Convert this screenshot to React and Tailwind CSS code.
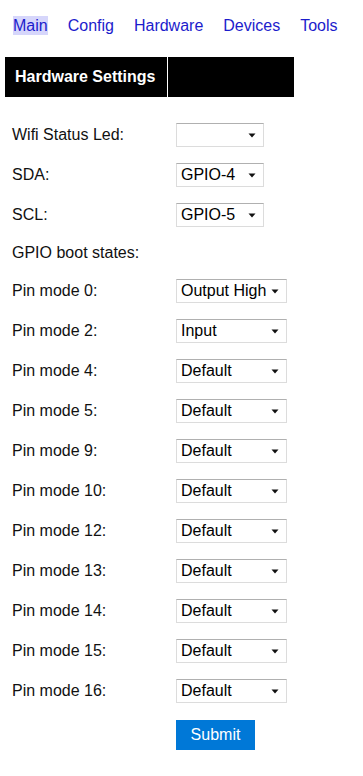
const navLinks = ['Main', 'Config', 'Hardware', 'Devices', 'Tools'];

const pinModes = [
    { pin: 0, value: 'Output High' },
    { pin: 2, value: 'Input' },
    { pin: 4, value: 'Default' },
    { pin: 5, value: 'Default' },
    { pin: 9, value: 'Default' },
    { pin: 10, value: 'Default' },
    { pin: 12, value: 'Default' },
    { pin: 13, value: 'Default' },
    { pin: 14, value: 'Default' },
    { pin: 15, value: 'Default' },
    { pin: 16, value: 'Default' }
];

// Fake native select: light border, darker top edge, tiny triangle on the right
const Select = ({ value, wide }) => (
    <div
        className={`flex items-center justify-between h-6 pl-1 pr-[7px] bg-white border border-[#dcdcdc] border-t-[#b0b0b0] ${
            wide ? 'w-[111px]' : 'w-[88px]'
        }`}
    >
        <span className="text-base leading-5 text-black whitespace-nowrap">{value}</span>
        <svg width="8" height="5" viewBox="0 0 8 5" className="shrink-0">
            <path d="M0.5 0.5 L7.5 0.5 L4 4.5 Z" fill="#111" />
        </svg>
    </div>
);

const Row = ({ label, children }) => (
    <div className="flex items-center h-10">
        <div className="w-[164px] shrink-0">{label}</div>
        {children}
    </div>
);

export default function App() {
    return (
        <div className="min-h-[776px] bg-white text-[#111] text-base" style={{ fontFamily: '"Liberation Sans", Arial, sans-serif' }}>
            {/* Top navigation */}
            <nav className="flex gap-5 pl-[13px] pt-4 leading-[19px]">
                {navLinks.map((link, i) => (
                    <a
                        key={link}
                        href="#"
                        className={`text-[#1c1ccc] ${i === 0 ? 'bg-[#d6d6fb]' : ''}`}
                    >
                        {link}
                    </a>
                ))}
            </nav>

            {/* Table header */}
            <div className="flex gap-[1px] ml-[5px] mt-[22px] h-10">
                <div className="w-[162px] bg-black text-white font-bold flex items-center pl-[10px]">
                    Hardware Settings
                </div>
                <div className="w-[126px] bg-black"></div>
            </div>

            <div className="pl-3 mt-[18px]">
                <Row label="Wifi Status Led:">
                    <Select value="" />
                </Row>
                <Row label="SDA:">
                    <Select value="GPIO-4" />
                </Row>
                <Row label="SCL:">
                    <Select value="GPIO-5" />
                </Row>
                <div className="flex items-center h-9">GPIO boot states:</div>
                {pinModes.map((p) => (
                    <Row key={p.pin} label={`Pin mode ${p.pin}:`}>
                        <Select value={p.value} wide />
                    </Row>
                ))}
                <div className="pl-[164px] pt-[9px]">
                    <button className="w-[79px] h-[30px] bg-[#0078d7] text-white text-base">
                        Submit
                    </button>
                </div>
            </div>
        </div>
    );
}
